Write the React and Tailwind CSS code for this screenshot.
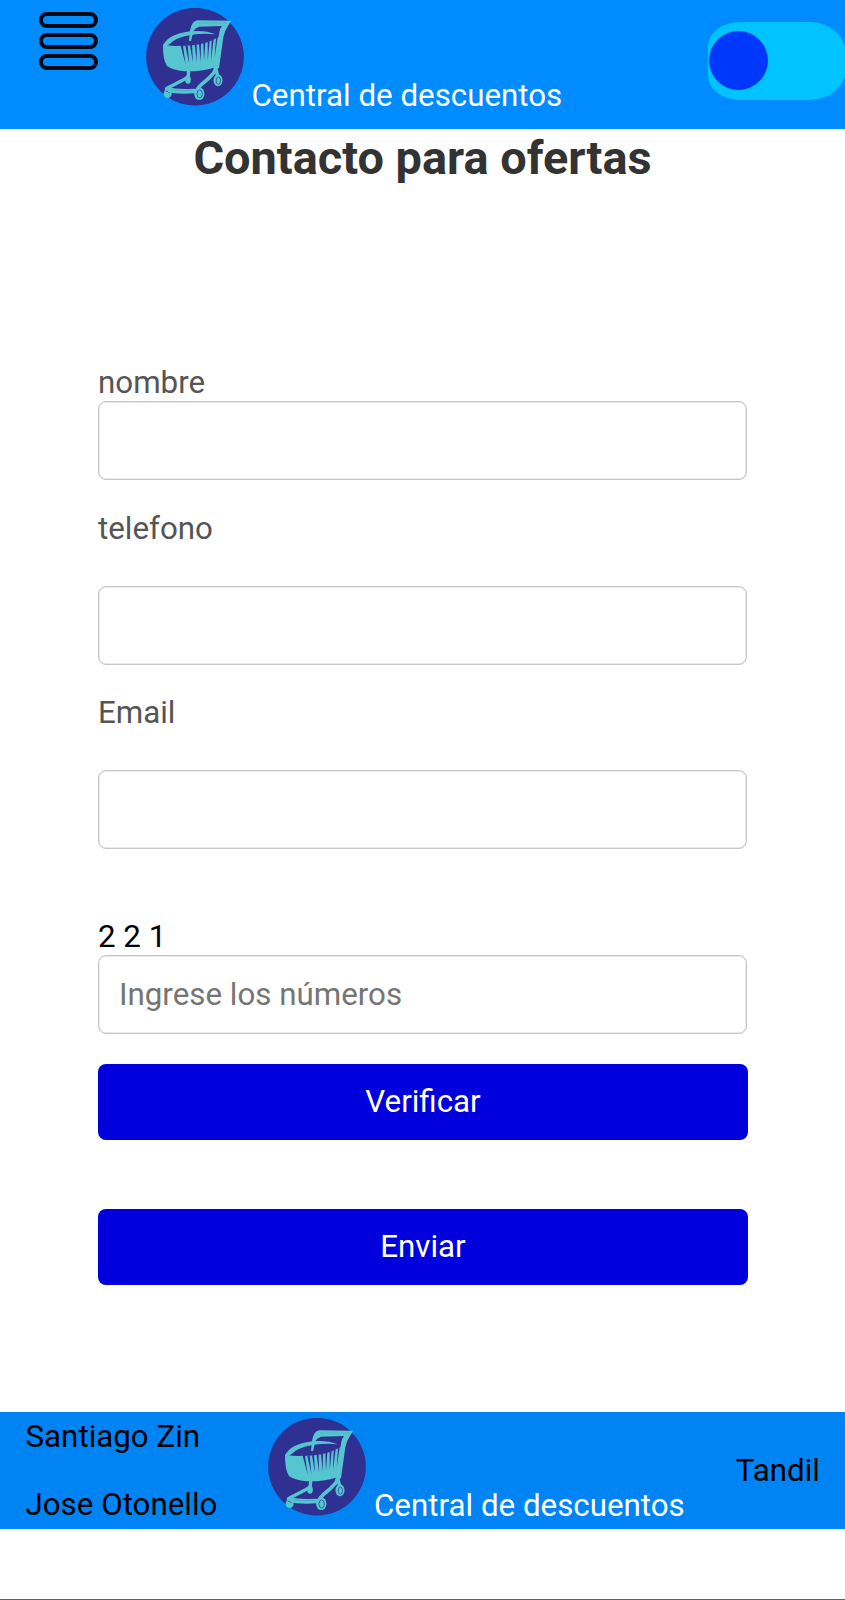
function CartLogo() {
  return (
    <svg viewBox="17 24 294 294" className="size-[98px] shrink-0" role="img" aria-label="Logo">
      <circle cx="164" cy="170" r="146.5" fill="#2e3192" />
      <g fill="#56c5d0">
        {/* basket */}
        <path d="M68 133 Q92 140 117 137 L124 138 Q180 137 210 123 L242 108 Q243 146 229 200 Q188 215 133 214 Q94 210 80 198 Q67 180 68 133Z" />
        {/* basket rim */}
        <path d="M68 137 Q82 103 149 94 Q194 89 226 103 Q190 99 151 105 Q106 112 84 135Z" />
        {/* handle and rear frame */}
        <path d="M146 122 L149 92 Q153 64 171 61 L273 62 L265 74 Q252 93 249 112 L236 205 L219 205 L237 96 Q240 84 245 78 L176 80 Q164 84 159 94 L152 124Z" />
      </g>
      <path d="M173 69 L259 69" fill="none" stroke="#4aa9c2" strokeWidth="1.5" />
      <g fill="#2e3192">
        <path d="M121 137 L128 137 L136 194Z" />
        <path d="M135 137 L142 136 L147 192Z" />
        <path d="M149 136 L155 135 L158 189Z" />
        <path d="M163 134 L169 133 L170 187Z" />
        <path d="M176 132 L182 131 L181 185Z" />
        <path d="M189 129 L195 127 L191 184Z" />
        <path d="M202 125 L208 122 L202 183Z" />
        <path d="M214 120 L220 117 L212 182Z" />
        <path d="M227 114 L232 111 L223 174Z" />
      </g>
      {/* undercarriage */}
      <g fill="none" stroke="#56c5d0" strokeLinecap="round" strokeLinejoin="round">
        <path d="M145 213 L144 226 Q140 235 124 242 L80 265" strokeWidth="10" />
        <path d="M227 202 L221 218 Q206 236 186 251 Q174 261 168 273" strokeWidth="11" />
        <path d="M80 268 Q110 277 162 273" strokeWidth="14" />
        <path d="M227 207 L232 228" strokeWidth="10" />
      </g>
      <path d="M91 269 Q120 274 157 271" fill="none" stroke="#4295b5" strokeWidth="1.5" />
      <g fill="#56c5d0">
        <ellipse cx="143" cy="239" rx="8.5" ry="12" />
        <ellipse cx="82" cy="281" rx="12" ry="13" />
        <ellipse cx="177" cy="281" rx="15.5" ry="19" />
        <ellipse cx="233" cy="241" rx="13.5" ry="18" />
      </g>
      <g fill="none" stroke="#2e3192" strokeWidth="2">
        <ellipse cx="178" cy="282" rx="8" ry="12" />
        <ellipse cx="234" cy="242" rx="6.5" ry="11" />
        <path d="M76 273 Q84 273 88 280" />
      </g>
    </svg>
  );
}

function Brand() {
  return (
    <div className="flex items-end">
      <CartLogo />
      <span className="-mb-2 ml-2 whitespace-nowrap text-white">Central de descuentos</span>
    </div>
  );
}

function MenuButton() {
  return (
    <button aria-label="Menu" className="flex flex-col gap-[5.3px]">
      <span className="h-[15.7px] w-[59px] rounded-full border-4 border-[#020814]" />
      <span className="h-[15.7px] w-[59px] rounded-full border-4 border-[#020814]" />
      <span className="h-[15.7px] w-[59px] rounded-full border-4 border-[#020814]" />
    </button>
  );
}

function Toggle() {
  return (
    <button aria-label="Tema" className="relative ml-auto h-[78px] w-[137px] overflow-hidden">
      <span className="block h-[78px] w-[138px] rounded-[33px_36px_36px_33px/24px_32px_32px_24px] bg-[#00c3ff]" />
      <span className="absolute left-[0.5px] top-[9px] size-[59px] rounded-full bg-[#0038fb]" />
    </button>
  );
}

const inputClass =
  "block h-[79px] w-full rounded-lg border border-[#c6c6c6] bg-white px-5 text-black shadow-[inset_0_0_0_0.5px_#d8d8d8] outline-none placeholder:text-[#757575] placeholder:opacity-100";
const buttonClass = "block h-[76px] w-[650px] rounded-lg bg-[#0000dc] pb-0.5 text-center text-white";

export default function App() {
  return (
    <div className="flex h-[1600px] w-[845px] flex-col overflow-hidden border-b border-[#606060] bg-white font-[Roboto,sans-serif] text-[31.3px] leading-[37px] text-black">
      <header className="flex h-[129px] shrink-0 items-start bg-[#008cff]">
        <div className="ml-[39px] mt-3">
          <MenuButton />
        </div>
        <div className="ml-[47.5px] mt-2">
          <Brand />
        </div>
        <div className="ml-auto mt-[22px]">
          <Toggle />
        </div>
      </header>

      <main className="flex h-[1283px] shrink-0 flex-col">
        <h1 className="text-center text-[46.9px] font-bold leading-[57px] text-[#333]">Contacto para ofertas</h1>
        <form className="mx-[98px] mt-[178px]" onSubmit={(e) => e.preventDefault()}>
          <label className="block text-[#555]" htmlFor="nombre">nombre</label>
          <input id="nombre" className={inputClass} />
          <label className="mb-[39px] mt-[30px] block text-[#555]" htmlFor="telefono">telefono</label>
          <input id="telefono" className={inputClass} />
          <label className="mb-[39px] mt-[29px] block text-[#555]" htmlFor="email">Email</label>
          <input id="email" className={inputClass} />
          <p className="mt-[69px]">2 2 1</p>
          <input className={inputClass} placeholder="Ingrese los números" />
          <button type="button" className={`mt-[30px] ${buttonClass}`}>Verificar</button>
          <button className={`mt-[69px] ${buttonClass}`}>Enviar</button>
        </form>
      </main>

      <footer className="flex h-[117px] shrink-0 items-start bg-[#0084f4] pr-[25px]">
        <div className="ml-[25.5px] mt-[6px] flex w-[242.5px] flex-col gap-[31px]">
          <p>Santiago Zin</p>
          <p>Jose Otonello</p>
        </div>
        <div className="mt-[6px]">
          <Brand />
        </div>
        <p className="ml-auto mt-10">Tandil</p>
      </footer>
    </div>
  );
}
